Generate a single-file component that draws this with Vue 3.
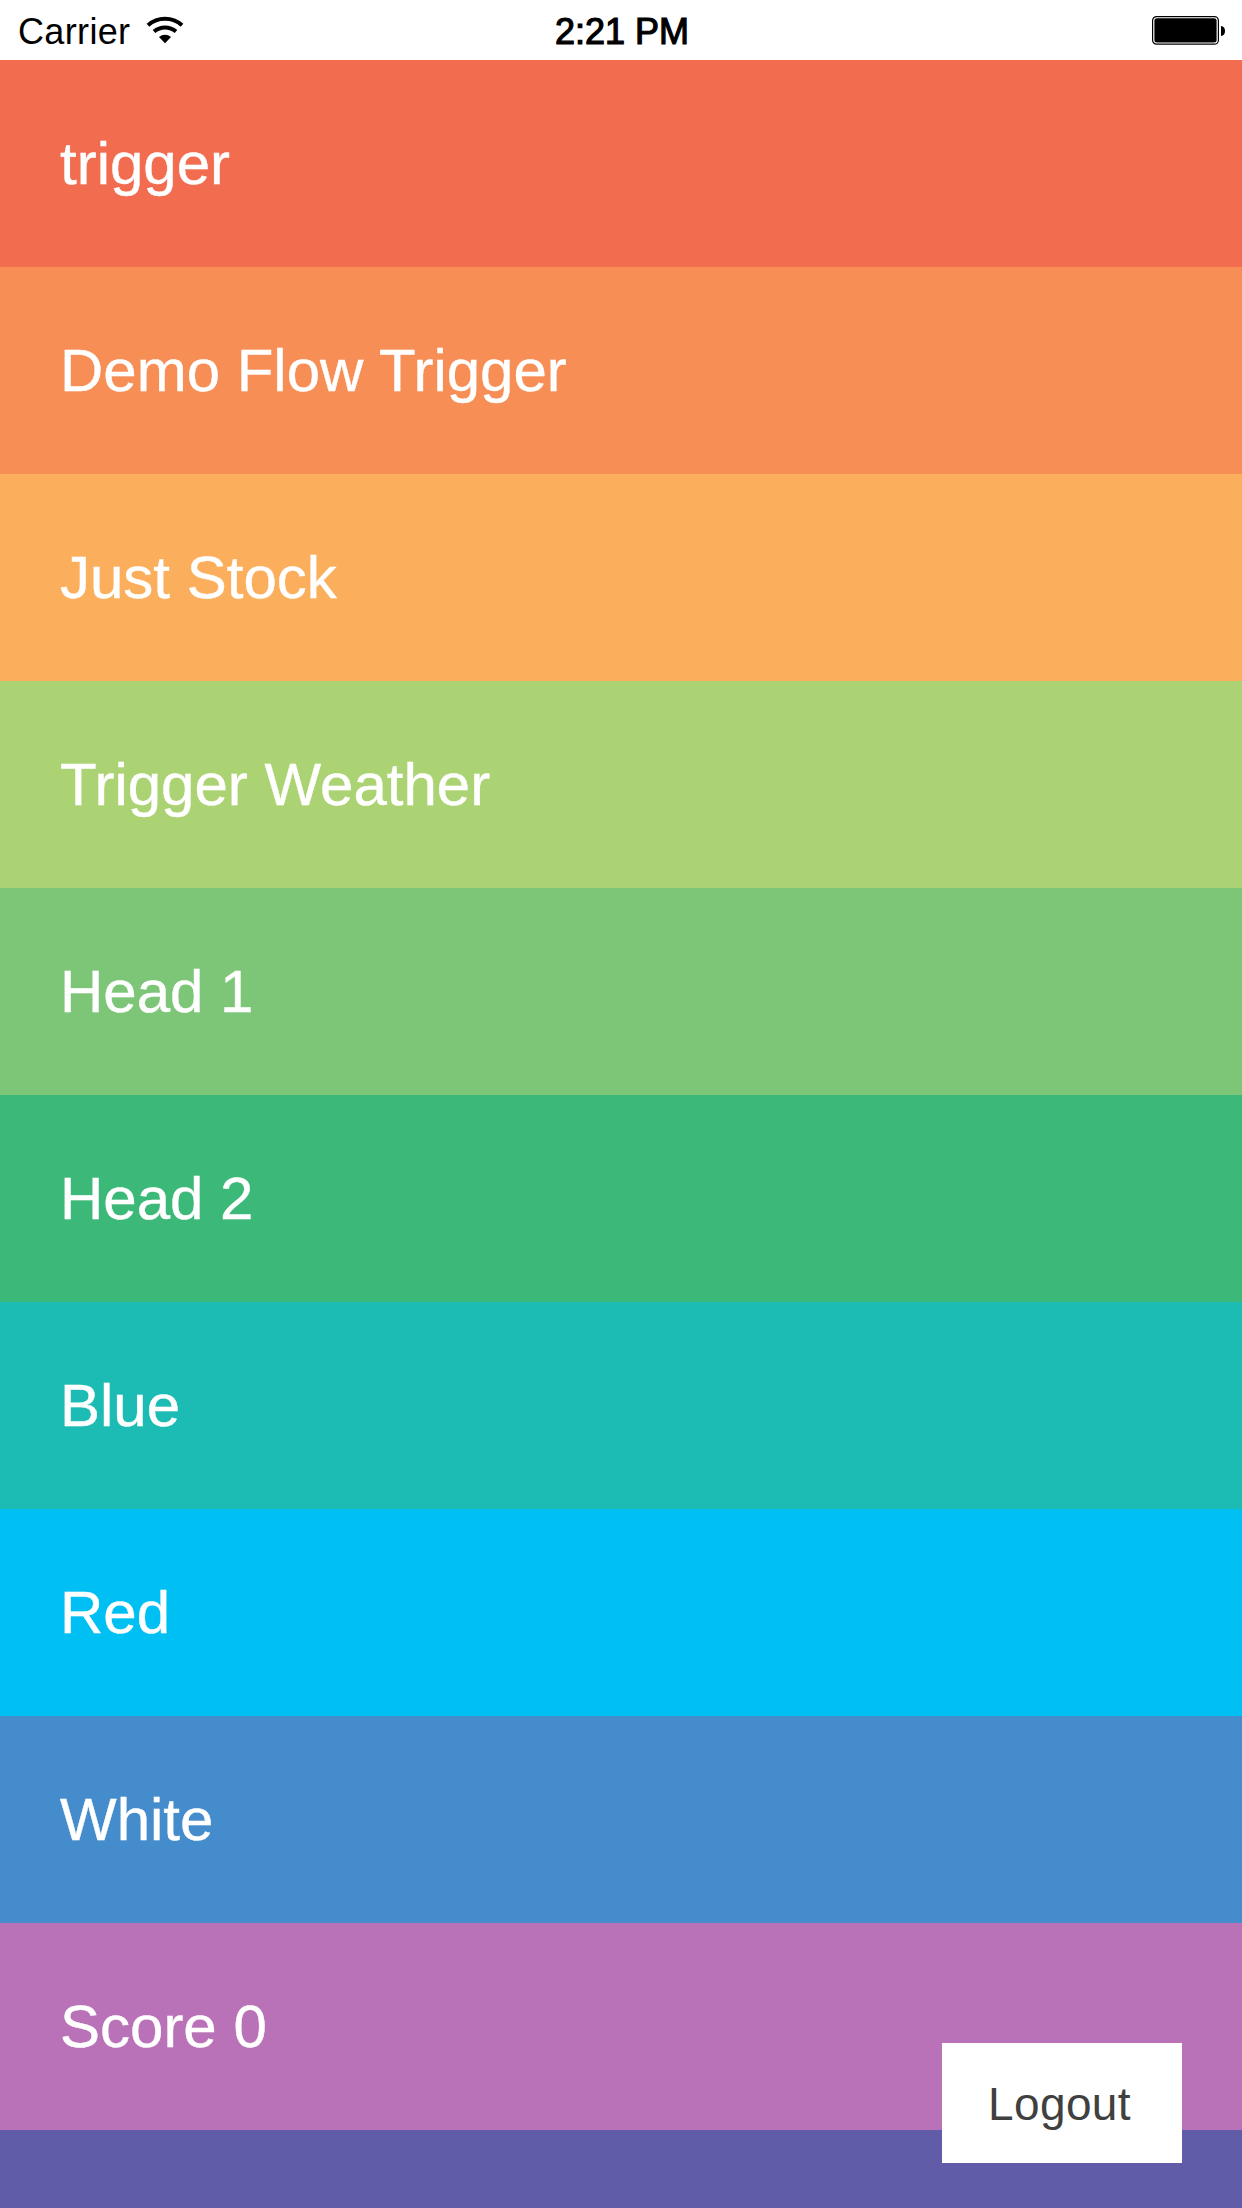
<script setup>
const rows = [
  { label: 'trigger', color: '#f26c4f' },
  { label: 'Demo Flow Trigger', color: '#f68e56' },
  { label: 'Just Stock', color: '#fbaf5d' },
  { label: 'Trigger Weather', color: '#acd373' },
  { label: 'Head 1', color: '#7dc577' },
  { label: 'Head 2', color: '#3cb878' },
  { label: 'Blue', color: '#1cbbb4' },
  { label: 'Red', color: '#00bff3' },
  { label: 'White', color: '#448ccb' },
  { label: 'Score 0', color: '#b972b7' },
  { label: '', color: '#605ca8' },
]
</script>

<template>
  <div class="screen">
    <header class="status">
      <div class="left">
        <span class="carrier">Carrier</span>
        <svg class="wifi" width="38" height="28" viewBox="0 0 38 28">
          <path d="M2 9.2 A25.5 25.5 0 0 1 36 9.2" />
          <path d="M8 15.6 A16.8 16.8 0 0 1 30 15.6" />
          <path class="fill" d="M13 21 A9.5 9.5 0 0 1 25 21 L19 27.3 Z" />
        </svg>
      </div>
      <span class="time">2:21 PM</span>
      <div class="right">
        <svg width="74" height="30" viewBox="0 0 74 30">
          <rect x="0.6" y="1.6" width="65.8" height="27.6" rx="4" fill="none" stroke="#000" stroke-width="1.2" />
          <rect x="2.4" y="3.3" width="62.2" height="24.2" rx="2.5" />
          <path d="M69 11 Q73 11.5 73 16 Q73 20.5 69 21 Z" />
        </svg>
      </div>
    </header>
    <main>
      <div v-for="(row, i) in rows" :key="i" class="row" :style="{ background: row.color }">{{ row.label }}</div>
    </main>
    <button class="logout">Logout</button>
  </div>
</template>

<style>
body { margin: 0; }
</style>
<style scoped>
.screen { position: relative; width: 1242px; height: 2208px; overflow: hidden; font-family: "Liberation Sans", Arial, sans-serif; }
.status { height: 60px; display: grid; grid-template-columns: 1fr auto 1fr; align-items: center; padding: 0 16px 0 18px; font-size: 36px; background: #fff; color: #000; }
.left { display: flex; align-items: center; gap: 16px; }
.carrier { padding-top: 3px; letter-spacing: 0.35px; }
.time { padding-top: 3px; -webkit-text-stroke: 1.2px #000; }
.right { display: flex; justify-content: flex-end; }
.wifi { fill: none; stroke: #000; stroke-width: 4; }
.wifi .fill { fill: #000; stroke: none; }
.row { height: 207px; box-sizing: border-box; padding-left: 60px; display: flex; align-items: center; color: #fff; font-size: 60px; -webkit-text-stroke: 0.4px #fff; }
.logout { position: absolute; left: 942px; top: 2043px; width: 240px; height: 120px; border: 0; padding: 2px 5px 0 0; background: #fff; color: #404040; font: 46px "Liberation Sans", Arial, sans-serif; letter-spacing: 0.4px; }
</style>
